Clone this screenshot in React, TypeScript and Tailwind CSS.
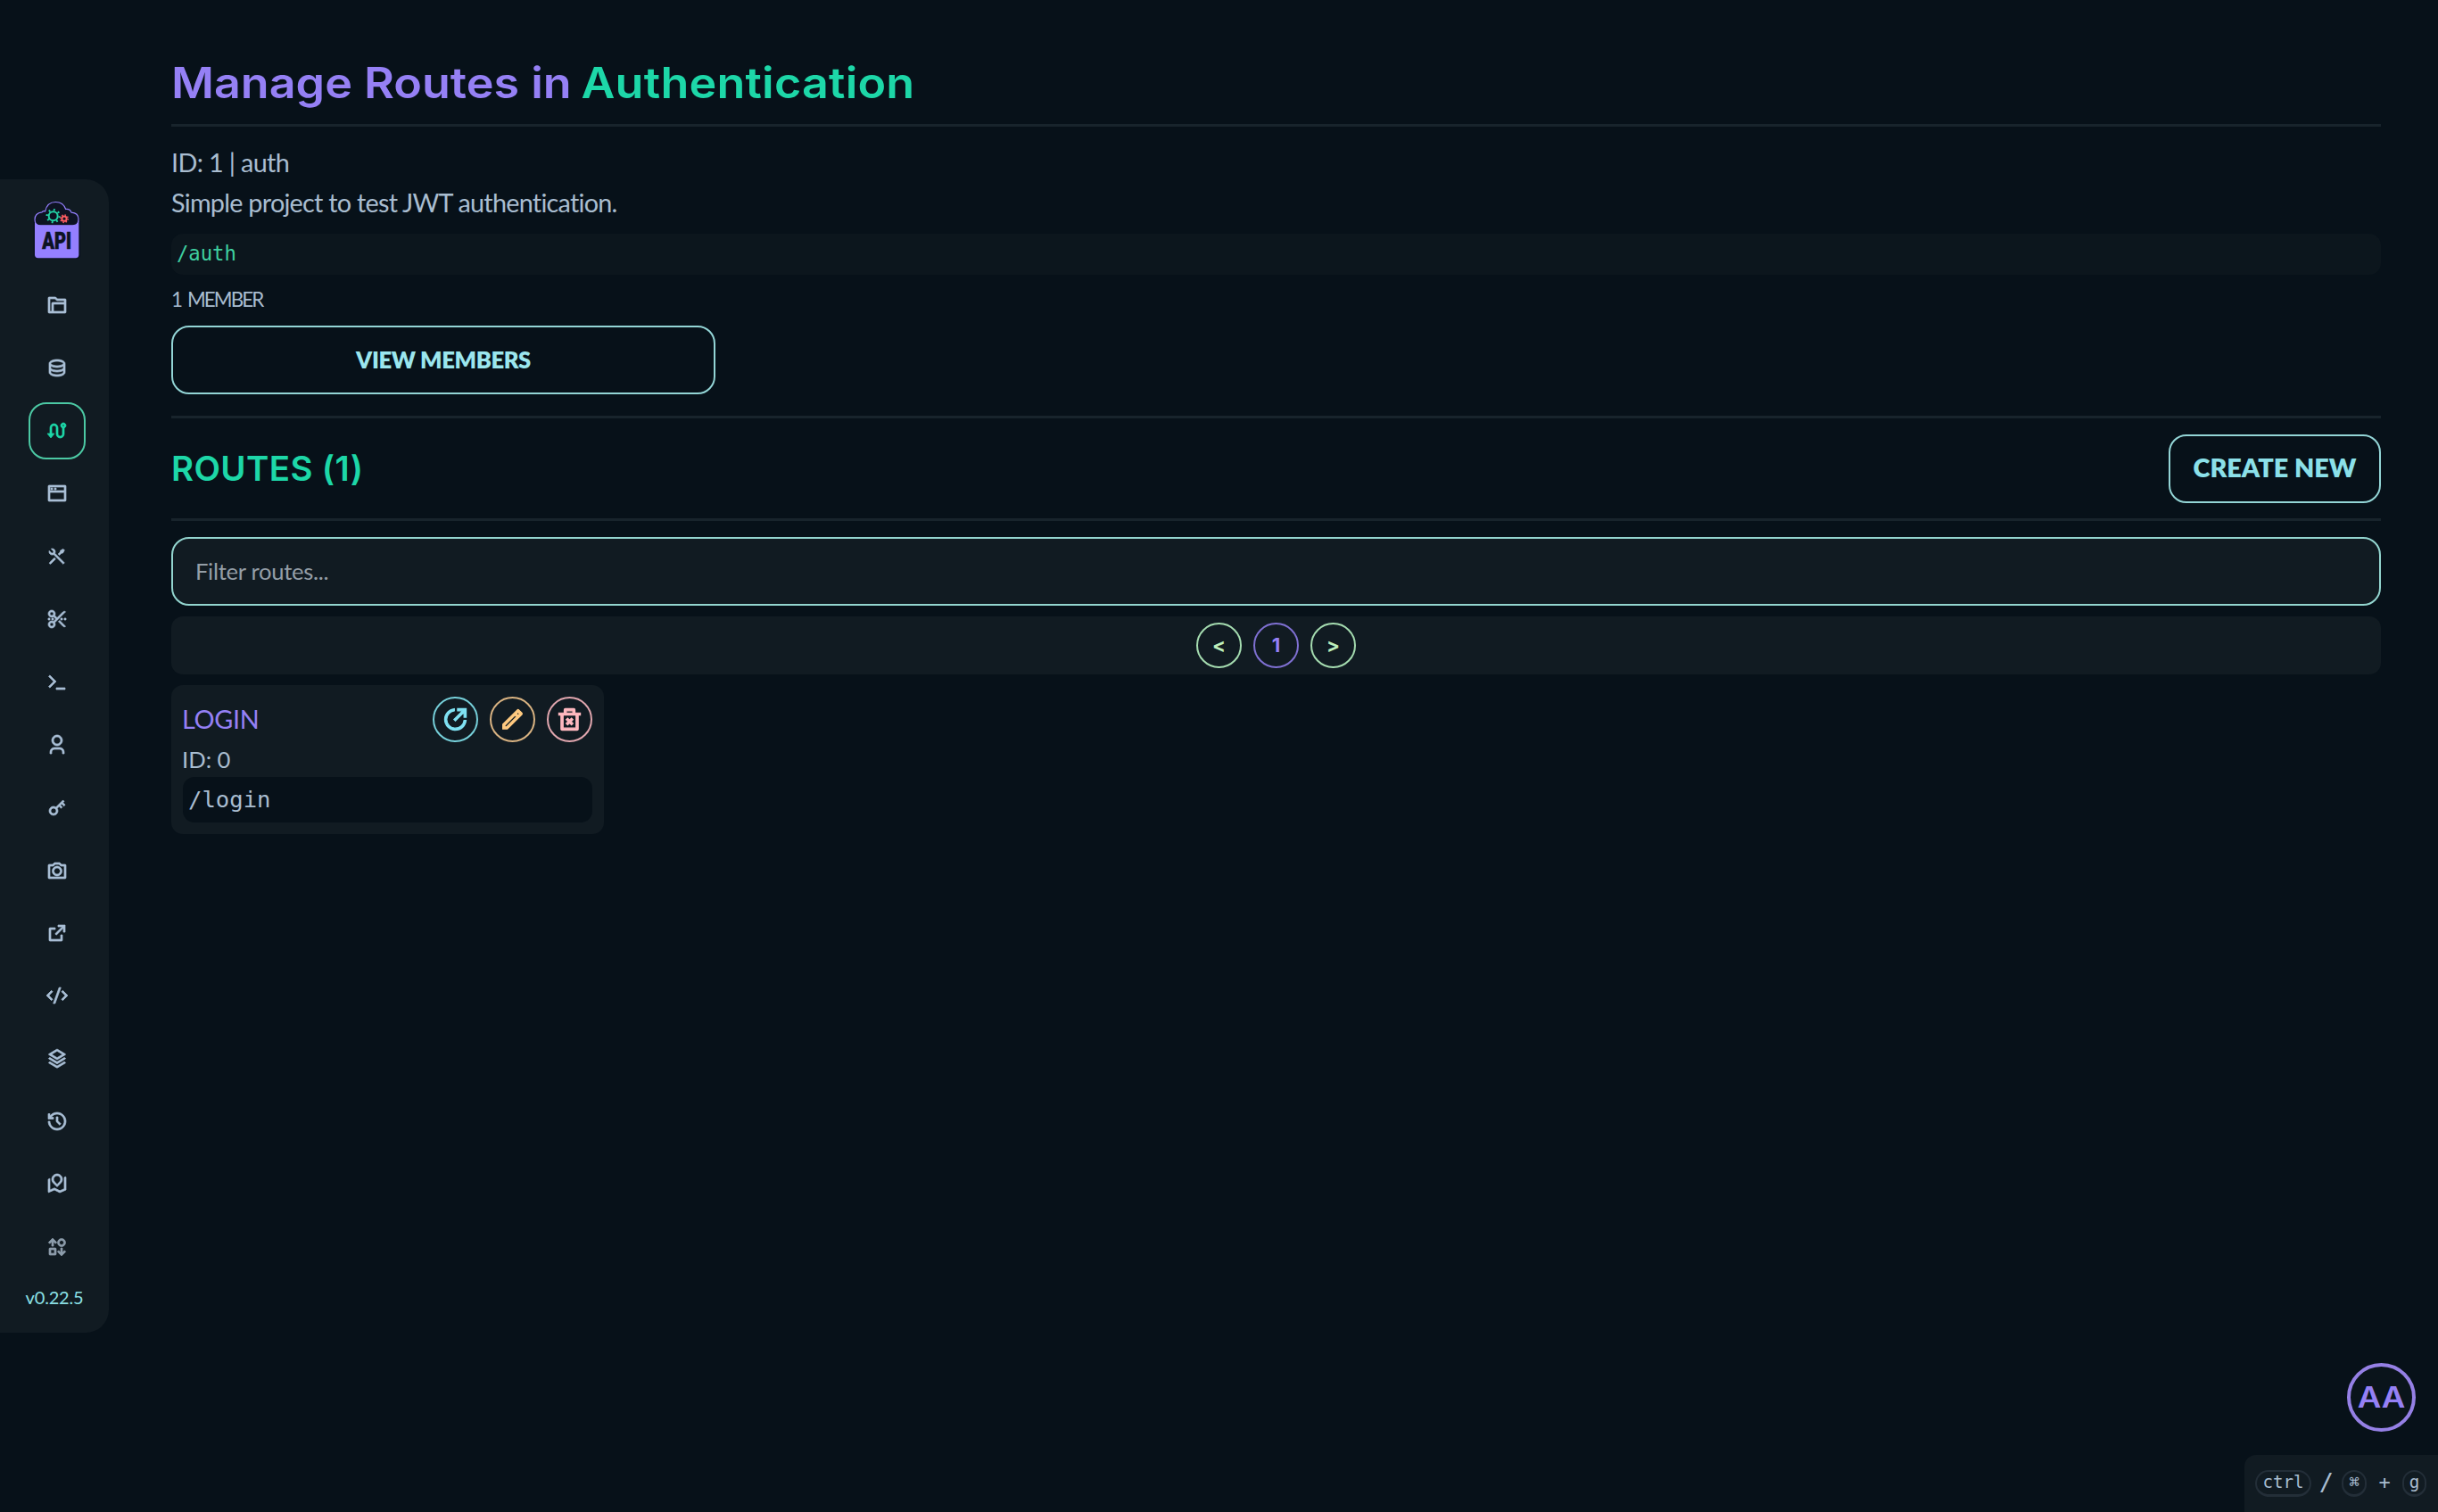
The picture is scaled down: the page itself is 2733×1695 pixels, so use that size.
import { useState } from 'react';
import type { ReactNode } from 'react';
import {
  RiCameraLine, RiCodeSSlashLine, RiDatabase2Line, RiDeleteBin2Line, RiExternalLinkLine, RiFolder4Line,
  RiHistoryLine, RiKey2Line, RiPencilLine, RiRoadMapLine, RiRouteLine, RiScissorsCutLine, RiShareCircleLine,
  RiStackLine, RiSwap3Line, RiTerminalLine, RiToolsLine, RiUser3Line, RiWindowLine,
} from 'react-icons/ri';
import { clsx } from 'clsx';

const navItems = [
  { label: 'Projects', Icon: RiFolder4Line },
  { label: 'Models', Icon: RiDatabase2Line },
  { label: 'Routes', Icon: RiRouteLine },
  { label: 'Playground', Icon: RiWindowLine },
  { label: 'Resolver', Icon: RiToolsLine },
  { label: 'Snippets', Icon: RiScissorsCutLine },
  { label: 'Console', Icon: RiTerminalLine },
  { label: 'Users', Icon: RiUser3Line },
  { label: 'Secrets', Icon: RiKey2Line },
  { label: 'Media', Icon: RiCameraLine },
  { label: 'Links', Icon: RiExternalLinkLine },
  { label: 'Code', Icon: RiCodeSSlashLine },
  { label: 'Stacks', Icon: RiStackLine },
  { label: 'History', Icon: RiHistoryLine },
  { label: 'Map', Icon: RiRoadMapLine },
  { label: 'Migrate', Icon: RiSwap3Line, dim: true },
];

const routes = [{ id: 0, name: 'LOGIN', path: '/login' }];

function Logo() {
  return (
    <svg viewBox="22 30 162 200" className="w-[54px] h-[67px]">
      <rect x="23" y="90" width="159" height="138" rx="13" fill="#0d1322" />
      <path d="M28 100h148v114a11 11 0 0 1-11 11H39a11 11 0 0 1-11-11z" fill="#9580ff" />
      <path
        d="M48 116c-14 0-20-8-20-20 0-14 9-23 24-25 3-3 7-4 11-3 4-19 17-31 35-31 17 0 29 9 34 24 9-1 16 3 19 11 15 1 24 9 24 23 0 13-7 21-20 21z"
        fill="#0d1322"
        stroke="#9580ff"
        strokeWidth="3.5"
      />
      <circle cx="90" cy="84" r="15" fill="none" stroke="#22d3a6" strokeWidth="6" />
      <circle cx="90" cy="84" r="21" fill="none" stroke="#22d3a6" strokeWidth="7" strokeDasharray="5.5 11" />
      <circle cx="127" cy="93" r="8" fill="none" stroke="#ff5d62" strokeWidth="6" />
      <circle cx="127" cy="93" r="13" fill="none" stroke="#ff5d62" strokeWidth="4" strokeDasharray="4.5 5.7" />
      <text
        x="102"
        y="196"
        textAnchor="middle"
        textLength="98"
        lengthAdjust="spacingAndGlyphs"
        fill="#0d1322"
        stroke="#0d1322"
        strokeWidth="2"
        className="font-['Roboto',sans-serif] font-black text-[76px]"
      >
        API
      </text>
    </svg>
  );
}

function Sidebar() {
  const [active, setActive] = useState('Routes');

  return (
    <aside className="self-center shrink-0 w-[122px] h-[1293px] pt-[23px] pl-[6px] rounded-r-[26px] bg-[#111b22] flex flex-col items-center">
      <Logo />
      <nav className="mt-[19px] flex flex-col gap-[6.4px]">
        {navItems.map(({ label, Icon, dim }) => (
          <button
            key={label}
            aria-label={label}
            onClick={() => setActive(label)}
            className={clsx(
              'size-16 rounded-[20px] border-2 flex items-center justify-center',
              active === label ? 'border-[#4cc9a4] text-[#1dd7a8]' : 'border-transparent',
              active !== label && (dim ? 'text-[#8c9cab]' : 'text-[#a9bfd6]')
            )}
          >
            <Icon size={24} strokeWidth={0.7} />
          </button>
        ))}
      </nav>
      <p className="mt-[11px] -ml-[6px] text-[20px] leading-[26px] tracking-[-0.2px] text-[#8be0e6]">v0.22.5</p>
    </aside>
  );
}

function CircleButton({ label, className, children }: { label: string; className: string; children: ReactNode }) {
  return (
    <button
      aria-label={label}
      className={clsx('size-[51px] rounded-full border-2 flex items-center justify-center', className)}
    >
      {children}
    </button>
  );
}

function Divider() {
  return <hr className="border-0 h-[3px] bg-[#18242c]" />;
}

function Kbd({ className, children }: { className: string; children: ReactNode }) {
  return (
    <kbd
      className={clsx(
        'h-[30px] rounded-full border-2 border-b-[3px] border-[#232e38] flex items-center justify-center font-["DejaVu_Sans_Mono",monospace] text-[19.2px]',
        className
      )}
    >
      {children}
    </kbd>
  );
}

export default function App() {
  const [filter, setFilter] = useState('');
  const visible = routes.filter((r) => r.name.toLowerCase().includes(filter.toLowerCase()));

  return (
    <div className="h-[1695px] flex bg-[#071119] font-['Lato',sans-serif] text-[#a9bdd0] overflow-hidden">
      <Sidebar />

      <main className="flex-1 pt-[51px] pl-[70px] pr-16">
        {/* Project */}
        <h1 className="h-[88px] pt-[11px] font-['Inter',sans-serif] font-semibold text-[48px] leading-[62px] text-[#9580f5]">
          <span className="inline-block origin-left scale-x-[1.084] whitespace-nowrap">
            Manage Routes in <span className="-ml-[2px] text-[#1dd7a8] tracking-[0.2px]">Authentication</span>
          </span>
        </h1>
        <Divider />
        <p className="mt-[18px] text-[28.8px] leading-[45px] tracking-[-0.65px]">ID: 1 | auth</p>
        <p className="text-[28.8px] leading-[45px] tracking-[-0.75px]">Simple project to test JWT authentication.</p>
        <p className="mt-[12px] h-[46px] px-[6px] rounded-[13px] bg-[#0c161d] font-['DejaVu_Sans_Mono',monospace] text-[22.2px] leading-[45px] text-[#3fd0a0]">
          /auth
        </p>
        <p className="mt-[12px] text-[22.4px] leading-[32px] tracking-[-1.9px] [word-spacing:3px]">1 MEMBER</p>
        <button className="mt-[13px] w-[610px] h-[77px] rounded-[20px] border-2 border-[#93d5d6] flex items-center justify-center font-extrabold text-[25.6px] tracking-[-0.4px] text-[#9be6ee]">
          VIEW MEMBERS
        </button>
        <div className="h-[24px]" />
        <Divider />

        {/* Routes */}
        <div className="h-[112px] flex items-center justify-between">
          <h2 className="pt-[2px] font-['Inter',sans-serif] font-semibold text-[38.4px] tracking-[0.4px] text-[#1dd7a8]">
            ROUTES ({routes.length})
          </h2>
          <button className="w-[238px] h-[77px] rounded-[20px] border-2 border-[#93d5d6] font-extrabold text-[28.8px] text-[#8be0e9]">
            CREATE NEW
          </button>
        </div>
        <Divider />
        <input
          value={filter}
          onChange={(e) => setFilter(e.target.value)}
          placeholder="Filter routes..."
          className="mt-[18px] block w-full h-[77px] px-[25px] pb-[2px] rounded-[20px] border-2 border-[#93d5cf] bg-[#111b22] text-[25.6px] tracking-[-0.3px] placeholder:text-[#949ea7] outline-none"
        />

        <div className="mt-[12px] h-[65px] rounded-[13px] bg-[#111b22] flex items-center justify-center gap-[13px] font-['Inter',sans-serif] font-bold text-[22px]">
          <CircleButton label="Previous" className="border-[#a5dcb0] text-[#bdeebb]">&lt;</CircleButton>
          <CircleButton label="Page 1" className="border-[#7f70d2] text-[#9580f5]">1</CircleButton>
          <CircleButton label="Next" className="border-[#a5dcb0] text-[#bdeebb]">&gt;</CircleButton>
        </div>

        <div className="mt-[12px] grid grid-cols-5 gap-[13px]">
          {visible.map((route) => (
            <div key={route.id} className="h-[167px] p-[13px] rounded-[13px] bg-[#111b22]">
              <div className="flex items-center justify-between">
                <h3 className="-ml-px text-[28.8px] tracking-[-0.3px] text-[#9580f5]">{route.name}</h3>
                <div className="flex gap-[13px]">
                  <CircleButton label="Open" className="border-[#76cfd9] text-[#80e2f3]">
                    <RiShareCircleLine size={29} strokeWidth={1} />
                  </CircleButton>
                  <CircleButton label="Edit" className="border-[#d9b382] text-[#ffca80]">
                    <RiPencilLine size={29} strokeWidth={1} />
                  </CircleButton>
                  <CircleButton label="Delete" className="border-[#e0a6ae] text-[#ffb8bf]">
                    <RiDeleteBin2Line size={29} strokeWidth={1} />
                  </CircleButton>
                </div>
              </div>
              <p className="-ml-px text-[25.6px] leading-[39px]">ID: {route.id}</p>
              <p className="h-[51px] px-[6px] rounded-[13px] bg-[#071119] font-['DejaVu_Sans_Mono',monospace] text-[25.6px] leading-[50px]">
                {route.path}
              </p>
            </div>
          ))}
        </div>
      </main>

      {/* Account and shortcut hint, floating over the page */}
      <button className="absolute left-[2631px] top-[1528px] size-[77px] rounded-full border-4 border-[#9580e5] bg-[#0a141b] flex items-center justify-center font-['Inter',sans-serif] font-semibold text-[32px] text-[#9580f5]">
        <span className="scale-x-[1.14]">AA</span>
      </button>
      <div className="absolute left-[2516px] top-[1631px] w-[217px] h-[64px] pl-[12px] pt-[17px] rounded-tl-[13px] bg-[#111b22] flex items-start font-['DejaVu_Sans_Mono',monospace]">
        <Kbd className="w-[63px]">ctrl</Kbd>
        <span className="w-[34px] text-center text-[27px] leading-[28px]">/</span>
        <Kbd className="w-[28px]">⌘</Kbd>
        <span className="w-[40px] text-center text-[22px] leading-[28px]">+</span>
        <Kbd className="w-[27px]">g</Kbd>
      </div>
    </div>
  );
}
